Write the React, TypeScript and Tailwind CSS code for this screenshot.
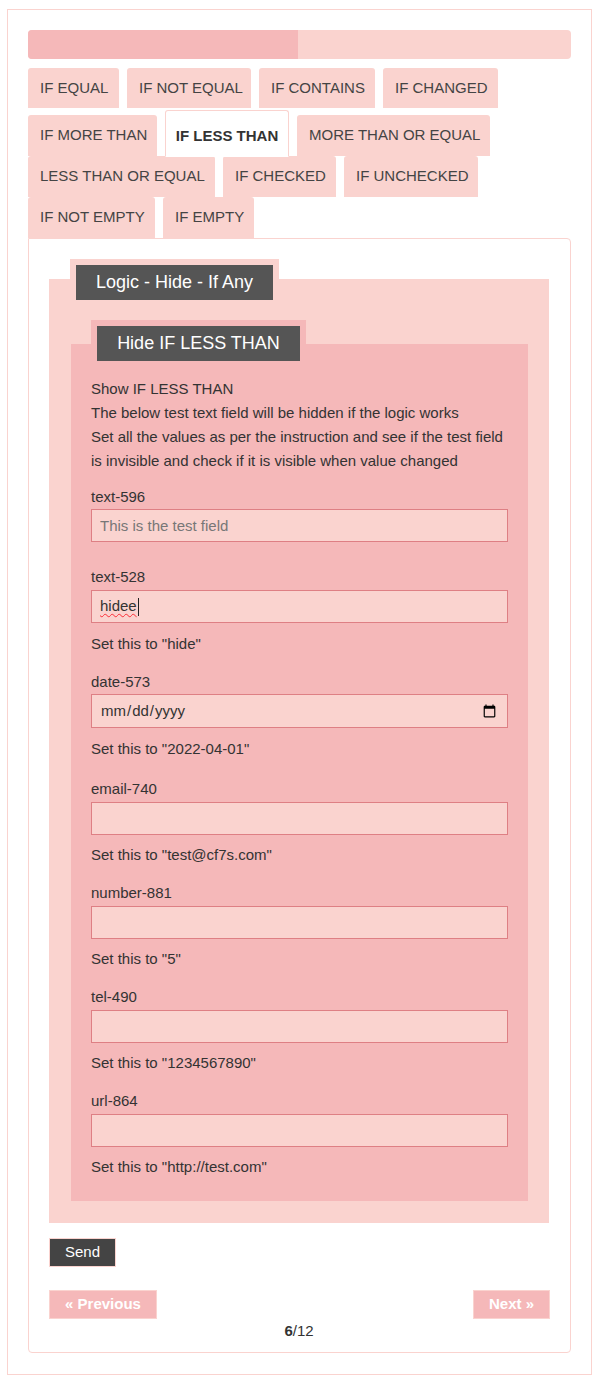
import React from 'react';

const tabRows: { label: string; w: string; active?: boolean }[][] = [
    [
        { label: 'IF EQUAL', w: 'w-[91px]' },
        { label: 'IF NOT EQUAL', w: 'w-[124px]' },
        { label: 'IF CONTAINS', w: 'w-[116px]' },
        { label: 'IF CHANGED', w: 'w-[115px]' },
    ],
    [
        { label: 'IF MORE THAN', w: 'w-[129px]' },
        { label: 'IF LESS THAN', w: 'w-[124px]', active: true },
        { label: 'MORE THAN OR EQUAL', w: 'w-[193px]' },
    ],
    [
        { label: 'LESS THAN OR EQUAL', w: 'w-[187px]' },
        { label: 'IF CHECKED', w: 'w-[113px]' },
        { label: 'IF UNCHECKED', w: 'w-[134px]' },
    ],
    [
        { label: 'IF NOT EMPTY', w: 'w-[127px]' },
        { label: 'IF EMPTY', w: 'w-[91px]' },
    ],
];

const inputCls =
    'block w-full h-[33px] border border-[#de7f84] bg-[#fad3cf] px-2 text-[15px] text-[#333] outline-none placeholder:text-[#777]';

function Field({ name, type = 'text', hint, mt = 'mt-[14px]' }: { name: string; type?: string; hint: string; mt?: string }) {
    return (
        <div className={mt}>
            <div className="leading-[24px]">{name}</div>
            <input type={type} className={`${inputCls} mt-[1px]`} />
            <div className="mt-[8px] leading-[24px]">{hint}</div>
        </div>
    );
}

export default function App() {
    return (
        <div className="min-h-[1389px] bg-white pt-[9px] pl-[7px] font-['Liberation_Sans',Arial,sans-serif] text-[15px] text-[#333]">
            <div className="w-[585px] h-[1366px] border border-[#fad3cf] px-[20px] pt-[20px]">
                {/* progress */}
                <div className="h-[29px] rounded-[4px] bg-[#fad3cf] overflow-hidden">
                    <div className="h-full w-[270px] bg-[#f5b8b9]" />
                </div>

                {/* tabs */}
                <div className="mt-[9px]">
                    {tabRows.map((row, i) => (
                        <div
                            key={i}
                            className={`flex items-end gap-2 ${i === 0 ? 'h-[40px]' : i === 1 ? 'mt-[2px] h-[46px]' : 'h-[41px]'}`}
                        >
                            {row.map((t) =>
                                t.active ? (
                                    <div
                                        key={t.label}
                                        className={`${t.w} h-[47px] -mb-px relative z-10 flex items-center justify-center pt-[5px] rounded-t-[3px] border border-[#fad3cf] border-b-white bg-white font-bold text-[#333]`}
                                    >
                                        {t.label}
                                    </div>
                                ) : (
                                    <div
                                        key={t.label}
                                        className={`${t.w} ${i === 0 ? 'h-[40px]' : 'h-[41px]'} flex items-center pl-3 rounded-t-[3px] bg-[#fad3cf] text-[#444]`}
                                    >
                                        {t.label}
                                    </div>
                                ),
                            )}
                        </div>
                    ))}
                </div>

                {/* panel */}
                <div className="h-[1115px] rounded-b-[4px] rounded-tr-[4px] border border-[#fad3cf] pt-[20px] pl-[20px] pr-[21px]">
                    {/* outer fieldset */}
                    <div className="mt-[20px] flex flex-col bg-[#fad3cf] pl-[22px] pr-[21px] pb-[22px]">
                        <div className="-mt-[20px] -ml-px self-start bg-[#fad3cf] p-[6px]">
                            <div className="flex h-[35px] w-[197px] items-center justify-center bg-[#555] text-[18px] text-white">
                                Logic - Hide - If Any
                            </div>
                        </div>

                        {/* inner fieldset */}
                        <div className="mt-[38px] flex flex-col bg-[#f5b8b9] px-[20px] pb-[22px]">
                            <div className="-mt-[24px] self-start bg-[#f5b8b9] p-[6px]">
                                <div className="flex h-[35px] w-[203px] items-center justify-center bg-[#555] text-[18px] text-white">
                                    Hide IF LESS THAN
                                </div>
                            </div>

                            <div className="mt-[10px] leading-[24px]">
                                <div>Show IF LESS THAN</div>
                                <div>The below test text field will be hidden if the logic works</div>
                                <div>Set all the values as per the instruction and see if the test field</div>
                                <div>is invisible and check if it is visible when value changed</div>
                            </div>

                            <div className="mt-[12px] leading-[24px]">text-596</div>
                            <input className={inputCls} placeholder="This is the test field" />

                            <div className="mt-[23px]">
                                <div className="leading-[24px]">text-528</div>
                                <div className={`${inputCls} mt-[1px] flex items-center`}>
                                    <span className="underline decoration-wavy decoration-red-500 decoration-1 underline-offset-2">
                                        hidee
                                    </span>
                                    <span className="ml-px h-[18px] w-px bg-[#222]" />
                                </div>
                                <div className="mt-[9px] leading-[24px]">Set this to "hide"</div>
                            </div>

                            <div className="mt-[14px]">
                                <div className="leading-[24px]">date-573</div>
                                <input type="date" className={`${inputCls} !h-[34px]`} />
                                <div className="mt-[9px] leading-[24px]">Set this to "2022-04-01"</div>
                            </div>

                            <Field name="email-740" type="email" hint={'Set this to "test@cf7s.com"'} mt="mt-[16px]" />
                            <Field name="number-881" type="number" hint={'Set this to "5"'} />
                            <Field name="tel-490" type="tel" hint={'Set this to "1234567890"'} />
                            <Field name="url-864" type="url" hint={'Set this to "http://test.com"'} />
                        </div>
                    </div>

                    <button className="mt-[15px] block h-[29px] w-[67px] border border-[#fad3cf] bg-[#444] text-[15px] text-white">
                        Send
                    </button>

                    <div className="mt-[23px] flex justify-between">
                        <button className="h-[29px] w-[108px] border border-[#fad3cf] bg-[#f5b8b9] text-[15px] font-bold text-white">
                            « Previous
                        </button>
                        <button className="-mr-px h-[29px] w-[77px] border border-[#fad3cf] bg-[#f5b8b9] text-[15px] font-bold text-white">
                            Next »
                        </button>
                    </div>
                    <div className="mt-[2px] text-center leading-[20px]">
                        <b>6</b>/12
                    </div>
                </div>
            </div>
        </div>
    );
}
